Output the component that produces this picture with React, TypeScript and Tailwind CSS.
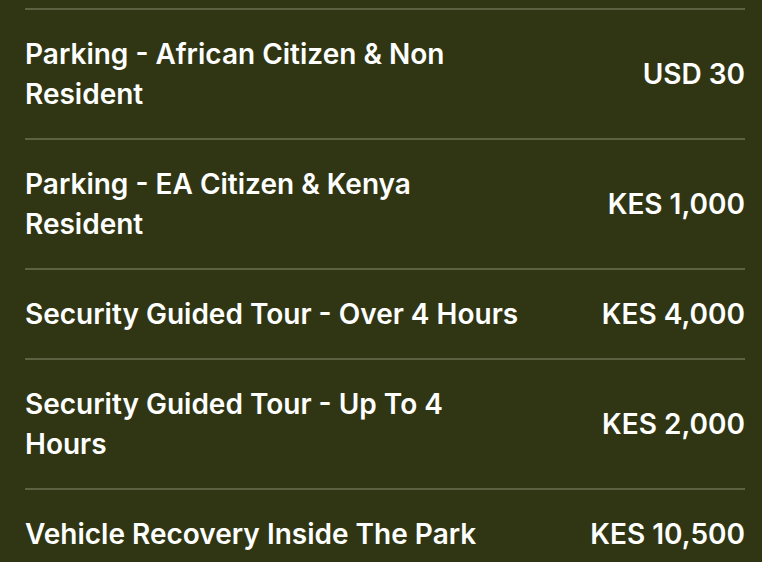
const fees = [
  { name: "Parking - African Citizen & Non Resident", price: "USD 30" },
  { name: "Parking - EA Citizen & Kenya Resident", price: "KES 1,000" },
  { name: "Security Guided Tour - Over 4 Hours", price: "KES 4,000" },
  { name: "Security Guided Tour - Up To 4 Hours", price: "KES 2,000" },
  { name: "Vehicle Recovery Inside The Park", price: "KES 10,500" },
];

export default function App() {
  return (
    <div
      className="min-h-screen bg-[#303614] pl-[25px] pr-[17px] pt-[8px] text-white"
      style={{ fontFamily: "Inter, 'Noto Sans', sans-serif" }}
    >
      {fees.map((fee) => (
        <div
          key={fee.name}
          className="flex items-center justify-between border-t-2 border-[#5b6142] py-[24px]"
        >
          <div className="w-[70%] text-[28px] font-semibold leading-[40px]">{fee.name}</div>
          <div className="text-[28px] font-semibold leading-[40px]">{fee.price}</div>
        </div>
      ))}
    </div>
  );
}
